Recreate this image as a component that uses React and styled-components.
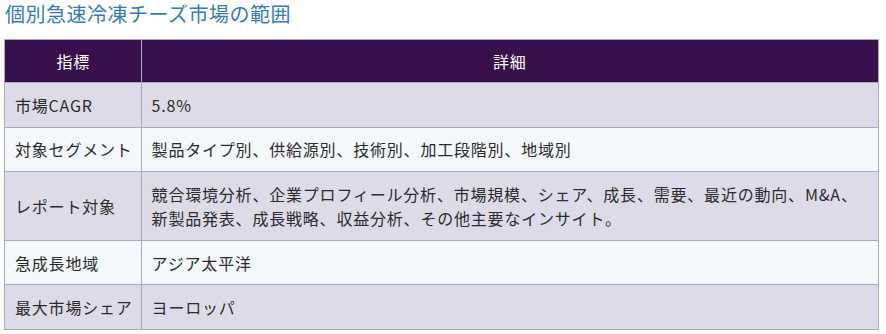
import React from 'react';
import styled, { createGlobalStyle } from 'styled-components';

const GlobalStyle = createGlobalStyle`
  body {
    margin: 0;
    background: #ffffff;
    font-family: "Noto Sans CJK JP", "Noto Sans", sans-serif;
  }
`;

const Page = styled.div`
  padding: 0 7px 0 4px;
`;

const Title = styled.h2`
  margin: 0 0 11px 1px;
  font-size: 20px;
  line-height: 28px;
  font-weight: 400;
  color: #2f7cc0;
  letter-spacing: 0.5px;
`;

const Table = styled.table`
  width: 875px;
  border-collapse: collapse;
  border: 1px solid #aca8c2;
  font-size: 16px;
  letter-spacing: 0.8px;
  color: #2b2b2b;
`;

const HeadCell = styled.th`
  background: #38104b;
  color: #ffffff;
  font-weight: 400;
  text-align: center;
  padding: 9px 10px;
  line-height: 24px;
  border: 1px solid #aca8c2;
  width: ${(p) => (p.$first ? '116px' : 'auto')};
  padding-right: ${(p) => (p.$first ? '9px' : '10px')};
`;

const Row = styled.tr`
  background: ${(p) => (p.$alt ? '#f3f8fb' : '#dedbe9')};
`;

const Cell = styled.td`
  padding: 9.8px 10px;
  padding-right: ${(p) => (p.$nowrap ? '8px' : '10px')};
  line-height: 24px;
  border: 1px solid #aca8c2;
  white-space: ${(p) => (p.$nowrap ? 'nowrap' : 'normal')};
  vertical-align: middle;
`;

const rows = [
  ['市場CAGR', '5.8%'],
  ['対象セグメント', '製品タイプ別、供給源別、技術別、加工段階別、地域別'],
  [
    'レポート対象',
    <>
      競合環境分析、企業プロフィール分析、市場規模、シェア、成長、需要、最近の動向、M&amp;A、
      <br />
      新製品発表、成長戦略、収益分析、その他主要なインサイト。
    </>,
  ],
  ['急成長地域', 'アジア太平洋'],
  ['最大市場シェア', 'ヨーロッパ'],
];

const App = () => {
  return (
    <Page>
      <GlobalStyle />
      <Title>個別急速冷凍チーズ市場の範囲</Title>
      <Table>
        <thead>
          <tr>
            <HeadCell $first>指標</HeadCell>
            <HeadCell>詳細</HeadCell>
          </tr>
        </thead>
        <tbody>
          {rows.map((r, i) => (
            <Row key={i} $alt={i % 2 === 1}>
              <Cell $nowrap>{r[0]}</Cell>
              <Cell>{r[1]}</Cell>
            </Row>
          ))}
        </tbody>
      </Table>
    </Page>
  );
};

export default App;
